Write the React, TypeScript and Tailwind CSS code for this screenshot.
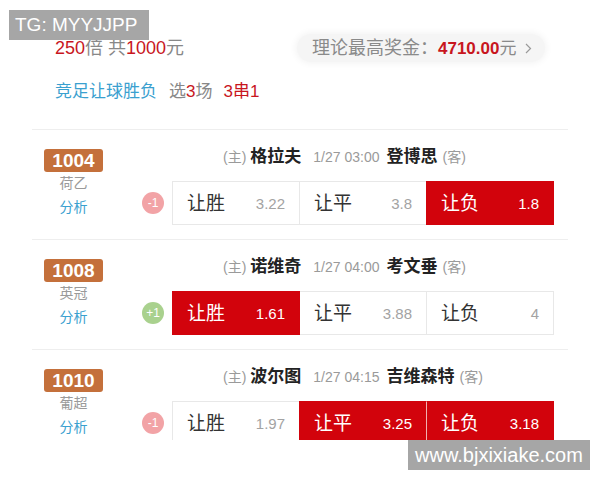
import React from "react";

type Match = {
  no: string;
  league: string;
  hc: string;
  hcColor: string;
  home: string;
  time: string;
  away: string;
  odds: string[];
  sel: boolean[];
};

const matches: Match[] = [
  { no: "1004", league: "荷乙", hc: "-1", hcColor: "bg-[#f2a3a6]", home: "格拉夫", time: "1/27 03:00", away: "登博思", odds: ["3.22", "3.8", "1.8"], sel: [false, false, true] },
  { no: "1008", league: "英冠", hc: "+1", hcColor: "bg-[#a9d18e]", home: "诺维奇", time: "1/27 04:00", away: "考文垂", odds: ["1.61", "3.88", "4"], sel: [true, false, false] },
  { no: "1010", league: "葡超", hc: "-1", hcColor: "bg-[#f2a3a6]", home: "波尔图", time: "1/27 04:15", away: "吉维森特", odds: ["1.97", "3.25", "3.18"], sel: [false, true, true] },
];

const labels = ["让胜", "让平", "让负"];

function OddBox({ label, odd, sel, first, prevSel }: { label: string; odd: string; sel: boolean; first: boolean; prevSel: boolean }) {
  const base = "w-[128px] h-[44px] flex items-center justify-between pl-[14px] pr-[14px] border";
  const cls = sel
    ? `${base} bg-[#d2030c] border-[#d2030c] ${!first && prevSel ? "border-l-[#f0b0b0]" : ""}`
    : `${base} bg-white border-[#e8e8e8]`;
  return (
    <div className={`${cls} ${first ? "" : "-ml-px"} ${sel ? "relative z-10" : ""}`}>
      <span className={`text-[19px] leading-none ${sel ? "text-white" : "text-[#333333]"}`}>{label}</span>
      <span className={`text-[15px] leading-none ${sel ? "text-white" : "text-[#a3a3a3]"}`}>{odd}</span>
    </div>
  );
}

function MatchRow({ m }: { m: Match }) {
  return (
    <div className="h-[110px] border-t border-[#eeeeee] flex">
      <div className="ml-[12px] w-[59px] pt-[19px] flex flex-col items-center">
        <div className="w-[59px] h-[23px] rounded-[3px] bg-[#c4703b] flex items-center justify-center text-white font-bold text-[19px] leading-none">
          {m.no}
        </div>
        <div className="mt-[1px] h-[20px] flex items-center text-[14px] text-[#9a9a9a]">{m.league}</div>
        <div className="mt-[4px] h-[20px] flex items-center text-[14px] text-[#3aa0cf]">分析</div>
      </div>
      <div className="ml-[39px] pt-[16px] flex flex-col">
        <div className="h-[22px] pl-[81px] flex items-center whitespace-nowrap">
          <span className="text-[14px] text-[#9a9a9a]">(主)</span>
          <span className="ml-[4px] text-[17px] font-bold text-[#222222]">{m.home}</span>
          <span className="ml-[12px] text-[14px] text-[#9a9a9a]">{m.time}</span>
          <span className="ml-[7px] text-[17px] font-bold text-[#222222]">{m.away}</span>
          <span className="ml-[5px] text-[14px] text-[#9a9a9a]">(客)</span>
        </div>
        <div className="mt-[13px] flex items-center">
          <div className={`w-[22px] h-[22px] rounded-full ${m.hcColor} flex items-center justify-center text-white text-[12px] leading-none`}>
            {m.hc}
          </div>
          <div className="ml-[8px] flex">
            {labels.map((l, i) => (
              <OddBox key={l} label={l} odd={m.odds[i]} sel={m.sel[i]} first={i === 0} prevSel={i > 0 && m.sel[i - 1]} />
            ))}
          </div>
        </div>
      </div>
    </div>
  );
}

export default function App() {
  return (
    <div className="relative w-[600px] h-[480px] bg-white overflow-hidden font-['Liberation_Sans','Noto_Sans_CJK_SC',sans-serif]">
      <div className="h-[440px] overflow-hidden">
        <div className="h-[129px] pl-[55px] flex flex-col">
          <div className="mt-[34px] h-[28px] flex items-center">
            <div className="w-[242px] flex items-center whitespace-nowrap text-[18px] leading-none">
              <span className="text-[#c8161e]">250</span>
              <span className="text-[#888888]">倍 共</span>
              <span className="text-[#c8161e]">1000</span>
              <span className="text-[#888888]">元</span>
            </div>
            <div className="w-[248px] h-[28px] rounded-full bg-[#f5f5f5] shadow-[0_0_6px_2px_#f5f5f5] pl-[15px] flex items-center whitespace-nowrap leading-none">
              <span className="text-[18px] text-[#8a8a8a]">理论最高奖金：</span>
              <span className="text-[17px] font-bold text-[#c8161e]">4710.00</span>
              <span className="text-[17px] text-[#8a8a8a]">元</span>
              <svg className="ml-[9px]" width="7" height="11" viewBox="0 0 7 11">
                <path d="M1 1 L5.5 5.5 L1 10" fill="none" stroke="#9a9a9a" strokeWidth="1.2" />
              </svg>
            </div>
          </div>
          <div className="mt-[17px] h-[24px] flex items-center whitespace-nowrap text-[17px] leading-none">
            <span className="text-[#3aa0cf]">竞足让球胜负</span>
            <span className="ml-[12px] text-[#888888]">选</span>
            <span className="text-[#c8161e]">3</span>
            <span className="text-[#888888]">场</span>
            <span className="ml-[11px] text-[#c8161e]">3串1</span>
          </div>
        </div>
        <div className="mx-[32px]">
          {matches.map((m) => (
            <MatchRow key={m.no} m={m} />
          ))}
        </div>
      </div>

      <div className="absolute left-[9px] top-[10px] w-[140px] h-[30px] bg-[#a6a6a6] flex items-center pl-[6px] text-white text-[19px] font-['Liberation_Sans',sans-serif]">
        TG: MYYJJPP
      </div>
      <div className="absolute left-[408px] top-[440px] w-[182px] h-[30px] bg-[#a6a6a6] flex items-center justify-center text-white text-[20px] font-['Liberation_Sans',sans-serif]">
        www.bjxixiake.com
      </div>
    </div>
  );
}
